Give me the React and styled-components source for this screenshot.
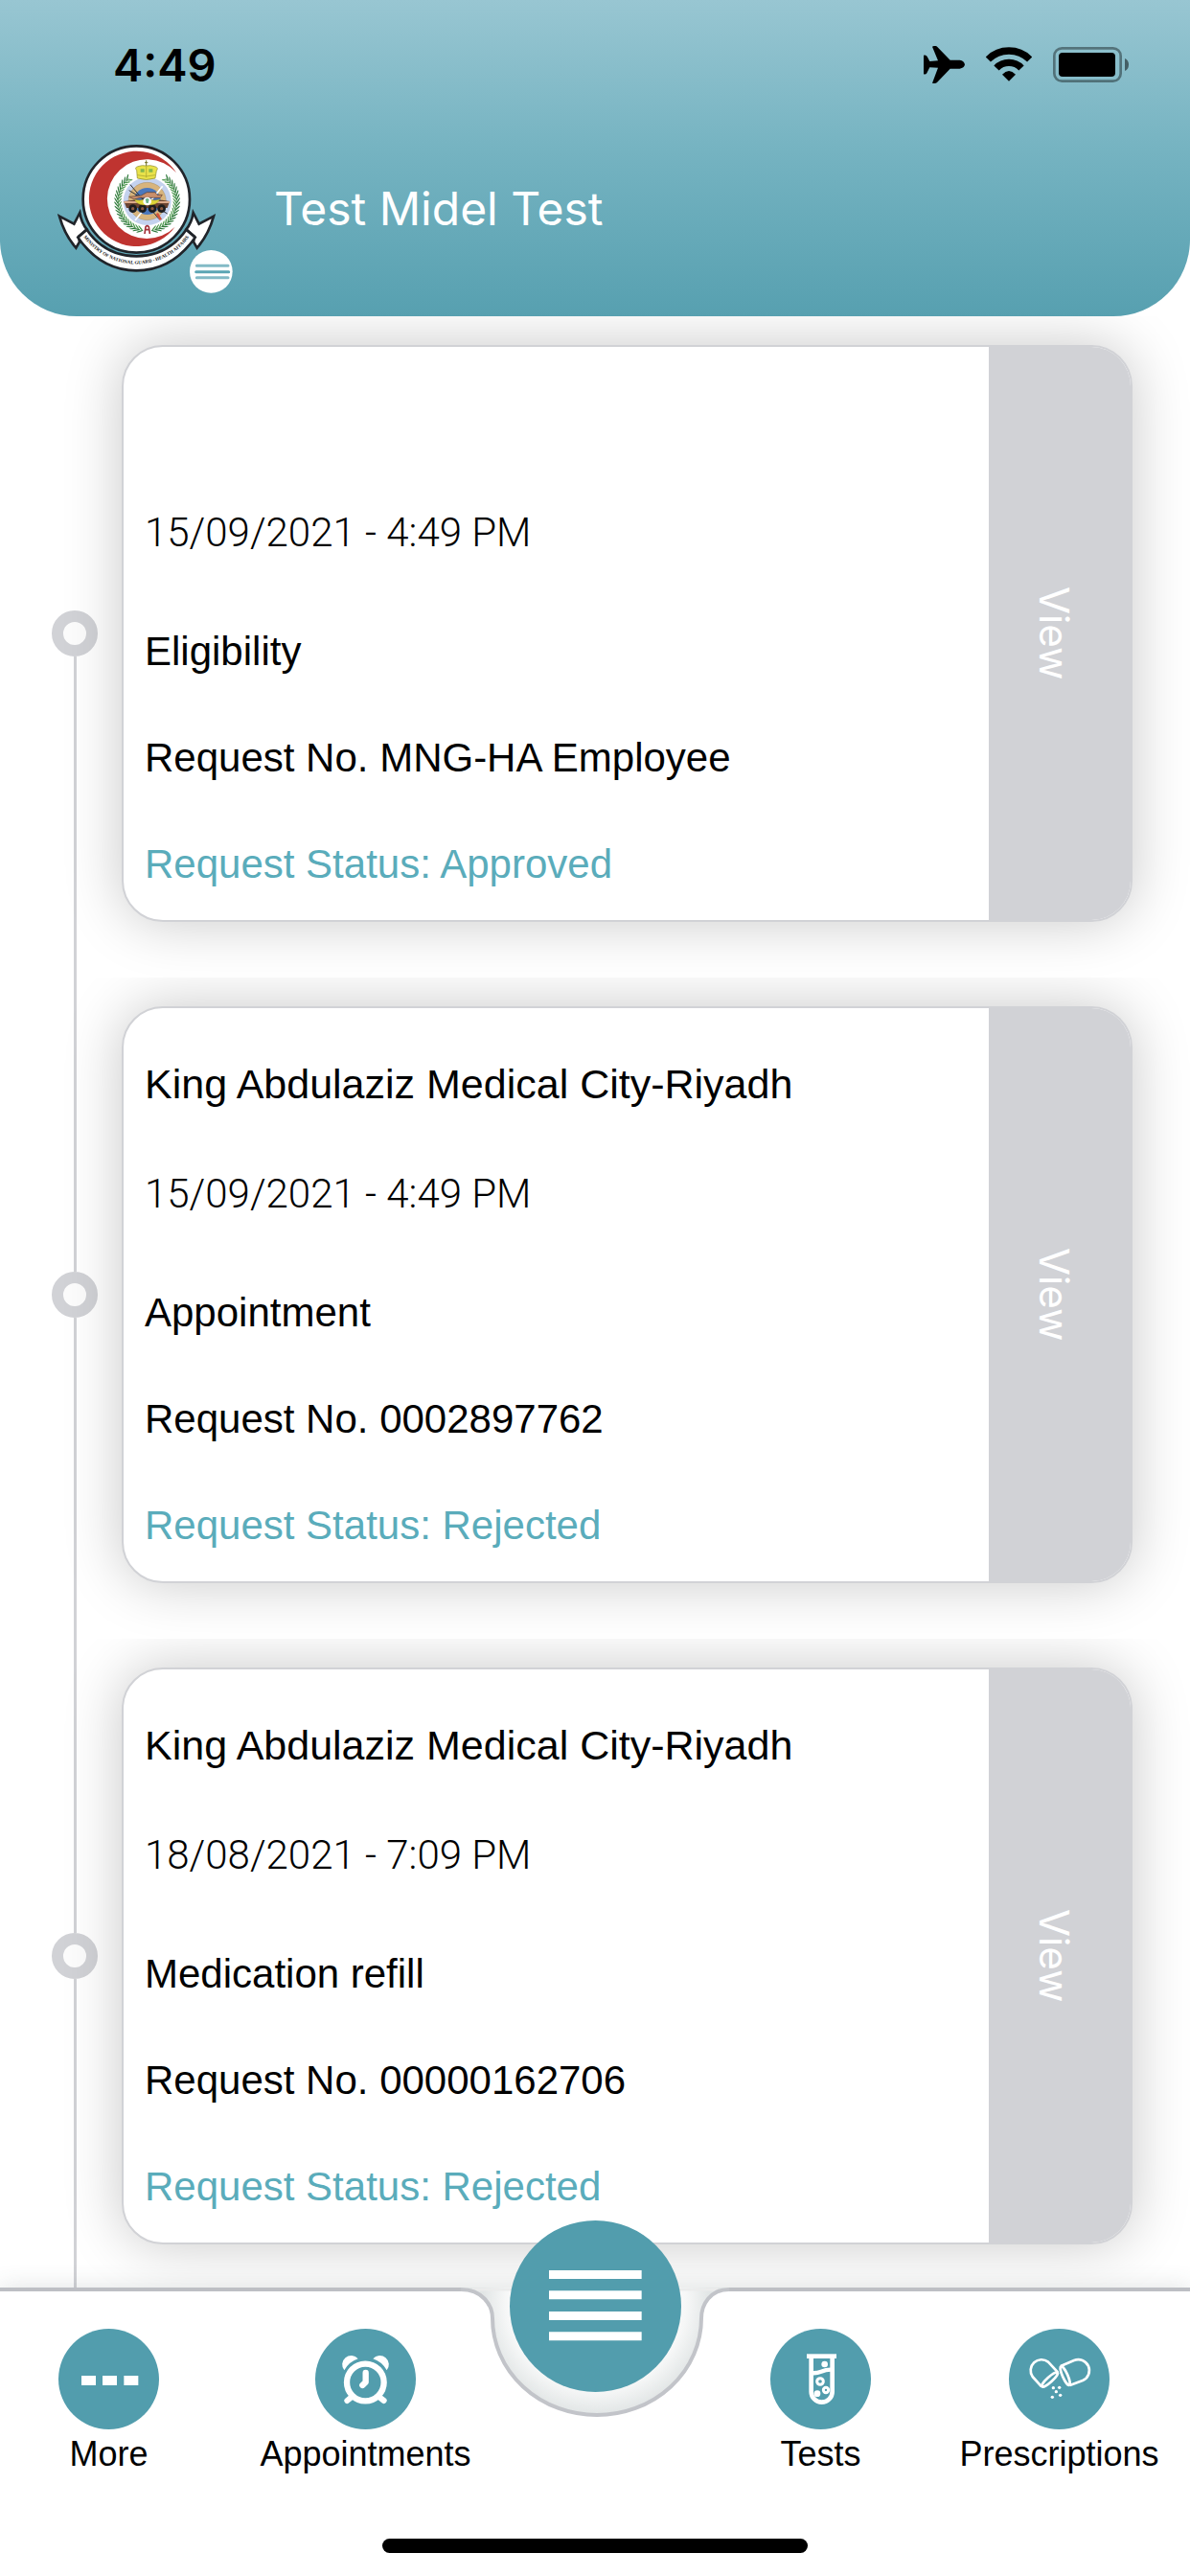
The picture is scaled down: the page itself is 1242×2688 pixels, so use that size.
import React from "react";
import styled, { createGlobalStyle } from "styled-components";

const GlobalStyle = createGlobalStyle`
  * {
    box-sizing: border-box;
  }

  body {
    margin: 0;
    background: #ffffff;
    color: #000000;
    font-family: "Liberation Sans", Arial, sans-serif;
  }

  button {
    padding: 0;
    border: 0;
    font-family: inherit;
    cursor: pointer;
  }
`;

const Screen = styled.div`
  display: flex;
  flex-direction: column;
  height: 100vh;
  overflow: hidden;
`;

const Header = styled.header`
  flex: none;
  height: 330px;
  background: linear-gradient(180deg, #98c6d2 0%, #75b3c1 48%, #57a0b0 100%);
  border-radius: 0 0 80px 80px;
`;

const StatusBar = styled.div`
  display: flex;
  align-items: center;
  justify-content: space-between;
  height: 134px;
  padding: 0 63px 0 118px;
`;

const Time = styled.span`
  font-family: Inter, sans-serif;
  font-size: 47px;
  font-weight: 600;
`;

const StatusIcons = styled.div`
  display: flex;
  align-items: center;
  gap: 22px;
`;

const Profile = styled.div`
  display: flex;
  align-items: center;
  gap: 61px;
  padding: 17px 60px 0;
`;

const Brand = styled.div`
  position: relative;
  width: 165px;
  height: 133px;
`;

const BadgeButton = styled.button`
  position: absolute;
  right: -18px;
  bottom: -22px;
  width: 45px;
  height: 45px;
  border-radius: 50%;
  background: none;
`;

const UserName = styled.h1`
  margin: 0;
  color: #ffffff;
  font-family: Inter, sans-serif;
  font-size: 48px;
  font-weight: 400;
`;

const Timeline = styled.ul`
  flex: 1;
  min-height: 0;
  margin: 0;
  padding: 0;
  overflow: hidden;
  list-style: none;
`;

const Entry = styled.li`
  display: flex;
  gap: 25px;
  padding: 0 60px 0 54px;
  overflow: hidden;
`;

const Rail = styled.div`
  display: flex;
  flex-direction: column;
  align-items: center;
  width: 48px;
`;

const Line = styled.span`
  flex: 1 1 ${props => (props.$tail ? "28px" : "0px")};
  width: 3px;
  background: ${props => (props.$hidden ? "transparent" : "#d1d2d6")};
`;

const Dot = styled.span`
  flex: none;
  width: 48px;
  height: 48px;
  border: 12px solid #d1d2d6;
  border-radius: 50%;
  background: #fcfcfc;
`;

const Card = styled.article`
  display: flex;
  flex: 1;
  margin: 30px 0 58px;
  border: 2px solid #d1d2d6;
  border-radius: 43px;
  overflow: hidden;
  background: #ffffff;
  box-shadow: 0 0 60px rgba(0, 0, 0, 0.22);
`;

const Details = styled.div`
  display: flex;
  flex: 1;
  flex-direction: column;
  gap: 63px;
  padding: 55px 22px 34px;
`;

const Text = styled.p`
  margin: 0;
  height: 48px;
  color: ${props => (props.$accent ? "#5aacbb" : "#000000")};
  font-size: 42px;
  line-height: 48px;
`;

const Place = styled(Text)`
  margin-bottom: 4px;
  font-size: 43px;
`;

const DateText = styled(Text)`
  margin-bottom: 13px;
  font-family: Roboto, "Liberation Sans", sans-serif;
  font-weight: 300;
`;

const ViewButton = styled.button`
  display: flex;
  align-items: center;
  justify-content: center;
  width: 148px;
  padding-right: 12px;
  background: #d1d2d6;
  color: #ffffff;
  font-family: Inter, sans-serif;
  font-size: 42px;
  writing-mode: vertical-rl;
`;

const Footer = styled.footer`
  position: relative;
  flex: none;
  background: #ffffff;
  box-shadow: 0 0 24px rgba(60, 80, 80, 0.16);
`;

const Tabs = styled.nav`
  display: grid;
  grid-template-columns: minmax(0, 1fr) 280px minmax(0, 1fr);
  height: 192px;
`;

const TabGroup = styled.div`
  display: flex;
  justify-content: space-between;
  padding: ${props => (props.$end ? "39px 84px 0 43px" : "39px 47px 0 61px")};
  border-top: 4px solid #bdbfc4;
`;

const Tab = styled.button`
  display: flex;
  flex-direction: column;
  align-items: center;
  gap: 8px;
  width: 105px;
  background: none;
  color: #000000;
`;

const TabIcon = styled.svg`
  flex: none;
  width: 105px;
  height: 105px;
  border-radius: 50%;
  background: #529dad;
`;

const TabLabel = styled.span`
  font-size: 36px;
  line-height: 36px;
  white-space: nowrap;
`;

const Hub = styled.div`
  position: relative;
  display: flex;
  justify-content: center;
`;

const Notch = styled.svg`
  position: absolute;
  top: 0;
  left: 0;
`;

const HubButton = styled.button`
  position: relative;
  width: 179px;
  height: 179px;
  margin-top: -70px;
  border-radius: 50%;
  background: #529dad;
`;

const HomeIndicator = styled.div`
  width: 444px;
  height: 15px;
  margin: 70px auto 24px;
  border-radius: 8px;
  background: #000000;
`;

const leaves = [];
for (let a = 10; a <= 136; a += 7) {
  leaves.push(a);
}

const Laurel = ({ flip }) => (
  <g transform={flip ? "translate(682 0) scale(-1 1)" : undefined}>
    <path
      d="M364 329A92 92 0 0 0 398 168"
      fill="none"
      stroke="#2c6e35"
      strokeWidth="2"
    />
    {leaves.map(a => (
      <g key={a} transform={`rotate(${a - 62} 341 240) translate(433 240)`}>
        <ellipse cx="-6" cy="0" rx="2" ry="11" fill="#4f9a50" transform="rotate(-35)" />
        <ellipse cx="6" cy="0" rx="2" ry="11" fill="#2f7a3c" transform="rotate(35)" />
      </g>
    ))}
  </g>
);

const Logo = () => (
  <svg width="165" height="133" viewBox="60 63 495 399" role="img" aria-label="Ministry of National Guard Health Affairs">
    <g fill="#fff" stroke="#20242a" strokeWidth="8" strokeLinejoin="miter">
      <path d="M66 287L112 311L130 276Q135 308 152 328L126 350L129 367L118 386Q82 345 66 287Z" />
      <path d="M549 287L503 311L485 276Q480 308 463 328L489 350L486 367L497 386Q533 345 549 287Z" />
      <path d="M152 329L124 353Q196 457 307 457Q419 457 491 353L463 329Q405 412 307 412Q209 412 152 329Z" />
      <circle cx="307" cy="234" r="167" />
    </g>
    <path d="M432 150A149 149 0 1 0 428 320A124 124 0 1 1 432 150Z" fill="#bf3430" />
    <Laurel />
    <Laurel flip />
    <circle cx="341" cy="240" r="75" fill="#c4d2ee" />
    <circle cx="341" cy="240" r="59" fill="#d8b47c" stroke="#8a7a5c" strokeWidth="1" />
    <circle cx="341" cy="240" r="42" fill="#4b78bd" />
    <path d="M284 206L404 279M288 188L378 296" stroke="#333" strokeWidth="3" />
    <path d="M303 300L389 193" stroke="#fff" strokeWidth="5" />
    <path d="M340 212H366L372 220H388L382 229H318L300 234L284 226L322 222Z" fill="#c98f6c" stroke="#5c3c2e" strokeWidth="2" />
    <path d="M268 240L300 236H388L411 240L404 261H276Z" fill="#6b4433" />
    <path d="M268 240H411V246H268Z" fill="#dba98b" />
    {[296, 326, 357, 386].map(x => (
      <g key={x}>
        <circle cx={x} cy="263" r="13" fill="#1d1d1f" />
        <circle cx={x} cy="263" r="5" fill="#8d5a42" />
      </g>
    ))}
    <path d="M338 251Q312 255 300 234Q318 240 329 235ZM343 251Q369 255 381 234Q363 240 352 235Z" fill="#ded43a" stroke="#8b8424" strokeWidth="1" />
    <path d="M368 280L375 276L387 296L380 300Z" fill="#d4523a" />
    <circle cx="341" cy="240" r="13" fill="#fff" />
    <path d="M335 234L341 230L347 234L344 246H338Z" fill="#6db48a" />
    <path d="M308 143Q300 134 312 131Q325 126 338 129Q351 126 364 131Q378 134 370 145L366 168Q338 177 310 168Z" fill="#e9e24a" stroke="#8b8828" strokeWidth="2" />
    <path d="M320 139H332V149H320ZM346 139H358V149H346Z" fill="#84b64d" />
    <path d="M310 158Q338 166 366 158M338 130V166" fill="none" stroke="#a39d2e" strokeWidth="2" />
    <path d="M338 112V129M333 119H343" stroke="#737329" strokeWidth="3" />
    <path d="M333 342L336 320Q341 314 346 320L349 342M334 329H348" fill="none" stroke="#a3333a" strokeWidth="5" />
    <path id="ribbonArc" d="M143 353A203 203 0 0 0 471 353" fill="none" />
    <text fontFamily="Liberation Serif, serif" fontSize="15" fontWeight="700" fill="#111" textAnchor="middle">
      <textPath href="#ribbonArc" startOffset="50%">
        MINISTRY OF NATIONAL GUARD - HEALTH AFFAIRS
      </textPath>
    </text>
  </svg>
);

const BadgeIcon = () => (
  <svg width="45" height="45" viewBox="0 0 135 135" aria-hidden="true">
    <circle cx="67" cy="67" r="67" fill="#fff" />
    <g strokeLinecap="round" strokeWidth="9">
      <path d="M22 49H120M22 86H120" stroke="#83bac6" />
      <path d="M20 68H122" stroke="#5ba5b4" />
    </g>
  </svg>
);

const AirplaneIcon = () => (
  <svg width="43" height="39" viewBox="429 145 129 117" aria-hidden="true">
    <path d="M558 203Q556 214 542 216H512L471 259Q467 263 456 261L474 213L448 212L439 230Q436 235 429 233V174Q437 172 440 178L448 193L474 191L456 147Q466 142 472 148L512 189H542Q556 191 558 203Z" />
  </svg>
);

const WifiIcon = () => (
  <svg width="48" height="36" viewBox="626 148 144 108" aria-hidden="true">
    <g fill="none" stroke="#000" strokeWidth="22">
      <path d="M633 187A92 92 0 0 1 763 187" />
      <path d="M659 214A54 54 0 0 1 737 214" />
    </g>
    <path d="M677 234Q698 212 719 234L698 255Z" />
  </svg>
);

const BatteryIcon = () => (
  <svg width="80" height="37" viewBox="837 147 240 111" aria-hidden="true">
    <rect x="841" y="151" width="208" height="103" rx="24" fill="none" stroke="#000" strokeOpacity="0.4" strokeWidth="8" />
    <rect x="855" y="165" width="177" height="75" rx="12" />
    <path d="M1062 183Q1074 188 1074 202Q1074 217 1062 222Z" fillOpacity="0.5" />
  </svg>
);

const MoreIcon = () => (
  <TabIcon viewBox="0 0 315 315" aria-hidden="true">
    <path d="M72 147H117V177H72ZM138 147H183V177H138ZM205 147H250V177H205Z" fill="#fff" />
  </TabIcon>
);

const AlarmIcon = () => (
  <TabIcon viewBox="0 0 315 315" aria-hidden="true">
    <g fill="#fff">
      <path d="M91 130A28 28 0 0 1 134 94Q106 103 91 130Z" />
      <path d="M224 130A28 28 0 0 0 181 94Q209 103 224 130Z" />
    </g>
    <g fill="none" stroke="#fff" strokeLinecap="round" strokeLinejoin="round">
      <circle cx="157" cy="168" r="58" strokeWidth="19" />
      <path d="M158 138V167L148 177" strokeWidth="19" />
      <path d="M116 212L100 225M198 212L215 225" strokeWidth="18" />
    </g>
  </TabIcon>
);

const TubeIcon = () => (
  <TabIcon viewBox="0 0 315 315" aria-hidden="true">
    <g fill="none" stroke="#fff">
      <path d="M128 86V197A33 33 0 0 0 194 197V86" strokeWidth="14" />
      <path d="M128 138C158 143 158 126 194 128" strokeWidth="13" />
      <circle cx="156" cy="165" r="10" strokeWidth="9" />
      <circle cx="174" cy="192" r="8" strokeWidth="9" />
    </g>
    <g fill="#fff">
      <rect x="114" y="79" width="93" height="14" />
      <circle cx="170" cy="111" r="10" />
      <circle cx="147" cy="203" r="10" />
    </g>
  </TabIcon>
);

const PillIcon = () => (
  <TabIcon viewBox="0 0 315 315" aria-hidden="true">
    <g fill="none" stroke="#fff" strokeWidth="8" strokeLinejoin="round">
      <path d="M102 181L74 150A34 34 0 0 1 123 104L153 136" />
      <ellipse cx="128" cy="159" rx="33" ry="8" transform="rotate(-42 128 159)" />
      <path d="M162 117L204 99A34 34 0 0 1 231 162L191 177" />
      <ellipse cx="176" cy="147" rx="32" ry="8" transform="rotate(66 176 147)" />
    </g>
    <g fill="#fff">
      <circle cx="139" cy="185" r="5" />
      <circle cx="158" cy="184" r="5" />
      <circle cx="148" cy="197" r="5" />
      <circle cx="161" cy="208" r="5" />
      <circle cx="136" cy="214" r="5" />
    </g>
  </TabIcon>
);

const HubNotch = () => (
  <Notch width="280" height="136" viewBox="0 0 280 136" aria-hidden="true">
    <defs>
      <radialGradient id="notchShade" gradientUnits="userSpaceOnUse" cx="141" cy="14" r="118">
        <stop offset="0.7" stopColor="#fbfbfb" />
        <stop offset="0.8" stopColor="#f6f7f7" />
        <stop offset="1" stopColor="#e2e6e6" />
      </radialGradient>
    </defs>
    <path d="M0 0V2C22 2 33 18 33 32A109 101 0 0 0 251 32C251 18 260 2 280 2V0Z" fill="url(#notchShade)" />
    <path d="M12 2H268" stroke="#ebecec" strokeWidth="3" />
    <path d="M0 2C22 2 33 18 33 32A109 101 0 0 0 251 32C251 18 260 2 280 2" fill="none" stroke="#c2c4c9" strokeWidth="4" />
  </Notch>
);

const HubIcon = () => (
  <svg width="179" height="179" viewBox="0 0 537 537" aria-hidden="true">
    <path d="M123 156H413V183H123ZM123 220H413V247H123ZM123 285H413V312H123ZM123 349H413V376H123Z" fill="#fff" />
  </svg>
);

const requests = [
  {
    id: "MNG-HA Employee",
    place: "",
    date: "15/09/2021 - 4:49 PM",
    type: "Eligibility",
    status: "Approved"
  },
  {
    id: "0002897762",
    place: "King Abdulaziz Medical City-Riyadh",
    date: "15/09/2021 - 4:49 PM",
    type: "Appointment",
    status: "Rejected"
  },
  {
    id: "00000162706",
    place: "King Abdulaziz Medical City-Riyadh",
    date: "18/08/2021 - 7:09 PM",
    type: "Medication refill",
    status: "Rejected"
  }
];

const Request = ({ request, first }) => (
  <Entry>
    <Rail>
      <Line $hidden={first} />
      <Dot />
      <Line $tail />
    </Rail>
    <Card>
      <Details>
        <Place>{request.place}</Place>
        <DateText>{request.date}</DateText>
        <Text>{request.type}</Text>
        <Text>Request No. {request.id}</Text>
        <Text $accent>Request Status: {request.status}</Text>
      </Details>
      <ViewButton type="button">View</ViewButton>
    </Card>
  </Entry>
);

const TabItem = ({ icon, label }) => (
  <Tab type="button">
    {icon}
    <TabLabel>{label}</TabLabel>
  </Tab>
);

const App = () => (
  <Screen>
    <GlobalStyle />
    <Header>
      <StatusBar>
        <Time>4:49</Time>
        <StatusIcons>
          <AirplaneIcon />
          <WifiIcon />
          <BatteryIcon />
        </StatusIcons>
      </StatusBar>
      <Profile>
        <Brand>
          <Logo />
          <BadgeButton type="button" aria-label="Open profile menu">
            <BadgeIcon />
          </BadgeButton>
        </Brand>
        <UserName>Test Midel Test</UserName>
      </Profile>
    </Header>
    <Timeline>
      {requests.map((request, i) => (
        <Request key={request.id} request={request} first={i === 0} />
      ))}
    </Timeline>
    <Footer>
      <Tabs>
        <TabGroup>
          <TabItem icon={<MoreIcon />} label="More" />
          <TabItem icon={<AlarmIcon />} label="Appointments" />
        </TabGroup>
        <Hub>
          <HubNotch />
          <HubButton type="button" aria-label="Services">
            <HubIcon />
          </HubButton>
        </Hub>
        <TabGroup $end>
          <TabItem icon={<TubeIcon />} label="Tests" />
          <TabItem icon={<PillIcon />} label="Prescriptions" />
        </TabGroup>
      </Tabs>
      <HomeIndicator />
    </Footer>
  </Screen>
);

export default App;
